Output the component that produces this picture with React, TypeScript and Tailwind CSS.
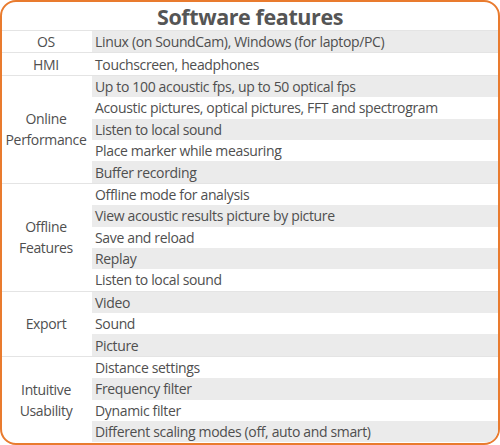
import React from "react";

const groups: { label: string[]; items: string[] }[] = [
  { label: ["OS"], items: ["Linux (on SoundCam), Windows (for laptop/PC)"] },
  { label: ["HMI"], items: ["Touchscreen, headphones"] },
  {
    label: ["Online", "Performance"],
    items: [
      "Up to 100 acoustic fps, up to 50 optical fps",
      "Acoustic pictures, optical pictures, FFT and spectrogram",
      "Listen to local sound",
      "Place marker while measuring",
      "Buffer recording",
    ],
  },
  {
    label: ["Offline", "Features"],
    items: [
      "Offline mode for analysis",
      "View acoustic results picture by picture",
      "Save and reload",
      "Replay",
      "Listen to local sound",
    ],
  },
  { label: ["Export"], items: ["Video", "Sound", "Picture"] },
  {
    label: ["Intuitive", "Usability"],
    items: [
      "Distance settings",
      "Frequency filter",
      "Dynamic filter",
      "Different scaling modes (off, auto and smart)",
    ],
  },
];

export default function App() {
  let idx = 0;
  return (
    <div className="w-[500px] h-[445px] bg-white">
      <div
        className="w-[500px] h-[445px] border-2 border-[#e97b2e] rounded-[16px] overflow-hidden bg-white flex flex-col text-[#4f4f4f]"
        style={{ fontFamily: '"Open Sans", sans-serif' }}
      >
        <div className="h-[28px] shrink-0 flex items-center justify-center text-[21.5px] font-bold tracking-[-0.4px] text-[#555555] leading-none pt-[1px]">
          Software features
        </div>
        <div className="flex flex-col">
          {groups.map((g, gi) => (
            <div key={gi} className="flex shrink-0 border-t border-[#e4e4e4]">
              <div className="w-[88px] shrink-0 flex flex-col items-center justify-center text-[14px] tracking-[-0.35px] leading-[21px]">
                {g.label.map((l, li) => (
                  <div key={li}>{l}</div>
                ))}
              </div>
              <div className="flex-1 ml-[2px] flex flex-col">
                {g.items.map((it, ii) => {
                  const gray = idx % 2 === 0;
                  idx++;
                  return (
                    <div
                      key={ii}
                      className={
                        (gray ? "bg-[#ebebeb] " : "bg-white ") +
                        "h-[21.4px] shrink-0 flex items-center pl-[3px] text-[14px] tracking-[-0.35px] whitespace-nowrap"
                      }
                    >
                      {it}
                    </div>
                  );
                })}
              </div>
            </div>
          ))}
        </div>
      </div>
    </div>
  );
}
